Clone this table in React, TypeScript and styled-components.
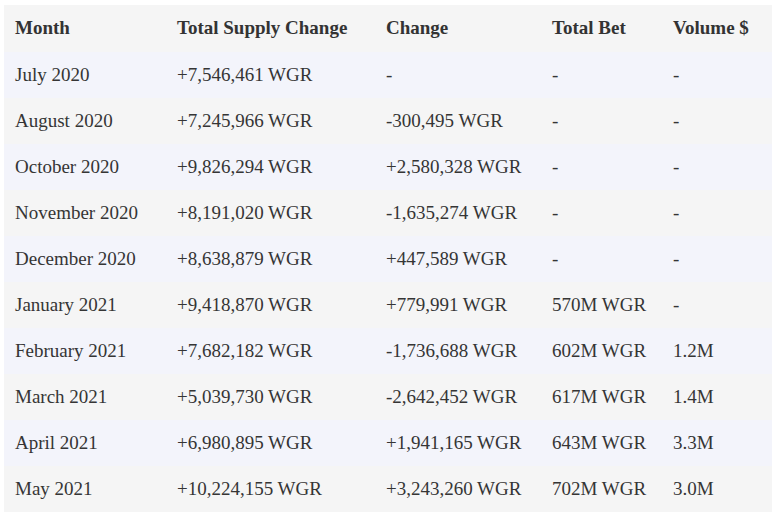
import React from "react";
import styled, { createGlobalStyle } from "styled-components";

const Global = createGlobalStyle`
  html, body { margin: 0; padding: 0; background: #ffffff; }
  body { font-family: "Liberation Serif", "Times New Roman", serif; }
`;

const Wrap = styled.div`
  padding: 5px 4px;
`;

const Table = styled.table`
  width: 768px;
  border-collapse: collapse;
  table-layout: fixed;
  font-family: "Liberation Serif", "Times New Roman", serif;
  font-size: 19px;
  color: #353535;
`;

const Col = styled.col<{ $w: number }>`
  width: ${(p) => p.$w}px;
`;

const HeadRow = styled.tr`
  background: #f5f5f5;
  height: 47px;
`;

const Th = styled.th`
  text-align: left;
  font-weight: 700;
  padding: 0 0 2px 11px;
  white-space: nowrap;
  color: #333333;
`;

const Row = styled.tr<{ $odd: boolean }>`
  background: ${(p) => (p.$odd ? "#f3f4fb" : "#f5f5f5")};
  height: 46px;
`;

const Td = styled.td`
  padding: 0 0 0 11px;
  white-space: nowrap;
  font-weight: 400;
`;

const headers = ["Month", "Total Supply Change", "Change", "Total Bet", "Volume $"];
const widths = [162, 209, 166, 121, 110];

const rows: string[][] = [
  ["July 2020", "+7,546,461 WGR", "-", "-", "-"],
  ["August 2020", "+7,245,966 WGR", "-300,495 WGR", "-", "-"],
  ["October 2020", "+9,826,294 WGR", "+2,580,328 WGR", "-", "-"],
  ["November 2020", "+8,191,020 WGR", "-1,635,274 WGR", "-", "-"],
  ["December 2020", "+8,638,879 WGR", "+447,589 WGR", "-", "-"],
  ["January 2021", "+9,418,870 WGR", "+779,991 WGR", "570M WGR", "-"],
  ["February 2021", "+7,682,182 WGR", "-1,736,688 WGR", "602M WGR", "1.2M"],
  ["March 2021", "+5,039,730 WGR", "-2,642,452 WGR", "617M WGR", "1.4M"],
  ["April 2021", "+6,980,895 WGR", "+1,941,165 WGR", "643M WGR", "3.3M"],
  ["May 2021", "+10,224,155 WGR", "+3,243,260 WGR", "702M WGR", "3.0M"],
];

export default function App() {
  return (
    <Wrap>
      <Global />
      <Table>
        <colgroup>
          {widths.map((w, i) => (
            <Col key={i} $w={w} />
          ))}
        </colgroup>
        <thead>
          <HeadRow>
            {headers.map((h) => (
              <Th key={h}>{h}</Th>
            ))}
          </HeadRow>
        </thead>
        <tbody>
          {rows.map((r, i) => (
            <Row key={r[0]} $odd={i % 2 === 0}>
              {r.map((c, j) => (
                <Td key={j}>{c}</Td>
              ))}
            </Row>
          ))}
        </tbody>
      </Table>
    </Wrap>
  );
}
